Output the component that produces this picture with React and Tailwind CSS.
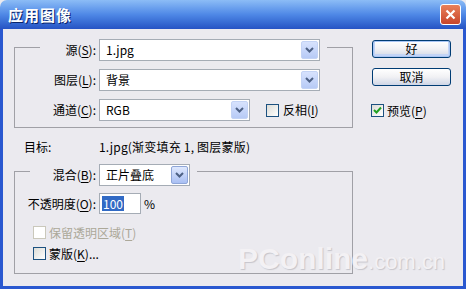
import React from "react";

const BODY = "bg-[#ebeaef]";

const U = ({ children }) => <span className="underline underline-offset-2">{children}</span>;

const Chevron = () => (
  <svg width="9" height="6" viewBox="0 0 9 6">
    <path d="M1 1 L4.5 4.5 L8 1" fill="none" stroke="#4d6185" strokeWidth="2" />
  </svg>
);

const Dropdown = ({ className, text, hot }) => (
  <div className={`h-[22px] border border-[#a5acb5] bg-white flex items-center justify-between ${className}`}>
    <span className="pl-[6px] leading-none">{text}</span>
    <div
      className={`w-[17px] h-[18px] mr-[1px] rounded-[2px] flex items-center justify-center border ${
        hot
          ? "border-[#8fa6d8] bg-gradient-to-b from-[#dfe8fd] to-[#a9bff3]"
          : "border-[#c3d3f5] bg-gradient-to-b from-[#d7e2fd] to-[#b7caf6]"
      }`}
    >
      <Chevron />
    </div>
  </div>
);

const Checkbox = ({ checked, disabled }) => (
  <div
    className={`w-[13px] h-[13px] border flex items-center justify-center ${
      disabled
        ? "border-[#cac8bb] bg-white"
        : "border-[#1c5180] bg-gradient-to-br from-[#dcdcd7] to-white"
    }`}
  >
    {checked && (
      <svg width="9" height="9" viewBox="0 0 9 9">
        <path d="M1 4 L3.5 6.5 L8 1.5" fill="none" stroke="#21a121" strokeWidth="2" />
      </svg>
    )}
  </div>
);

const Button = ({ children, primary }) => (
  <div
    className={`w-[79px] h-[18px] border border-[#003c74] rounded-[3px] flex items-center justify-center bg-gradient-to-b from-white via-[#f1f1f4] to-[#cfd6e6] ${
      primary ? "shadow-[inset_0_0_0_1px_#a9c6f5,inset_0_-1px_0_2px_#c3d4f6]" : ""
    }`}
  >
    <span className="leading-none">{children}</span>
  </div>
);

export default function App() {
  return (
    <div
      className={`w-[466px] h-[289px] relative overflow-hidden ${BODY} text-[12px] text-black`}
      style={{ fontFamily: '"Noto Sans CJK SC", "Liberation Sans", sans-serif' }}
    >
      {/* title bar */}
      <div className="h-[29px] rounded-t-[7px] flex items-center justify-between pl-[8px] pr-[5px] bg-gradient-to-b from-[#8cbcf6] via-[#4f88e6] to-[#2653c4]">
        <span className="text-white font-bold text-[15px] tracking-[1px] leading-none [text-shadow:1px_1px_0_#0a246a]">
          应用图像
        </span>
        <div className="w-[21px] h-[21px] rounded-[3px] border border-white bg-gradient-to-b from-[#e9805a] to-[#c8442a] flex items-center justify-center">
          <svg width="11" height="11" viewBox="0 0 11 11">
            <path d="M1.5 1.5 L9.5 9.5 M9.5 1.5 L1.5 9.5" stroke="white" strokeWidth="2.2" />
          </svg>
        </div>
      </div>

      {/* body */}
      <div className="h-[260px] flex border-l-[3px] border-r-[3px] border-b-[3px] border-[#2a58d0]">
        <div className="w-[339px] ml-[11px]">
          {/* group 1 */}
          <div className="mt-[18px] h-[81px] border border-[#a0a0a6]">
            <div className={`-mt-[9px] ml-[25px] w-[287px] h-[22px] flex items-center ${BODY}`}>
              <span className="w-[56px] text-right">
                源(<U>S</U>):
              </span>
              <Dropdown className="ml-[3px] w-[221px]" text="1.jpg" />
            </div>
            <div className="mt-[8px] ml-[25px] h-[22px] flex items-center">
              <span className="w-[56px] text-right">
                图层(<U>L</U>):
              </span>
              <Dropdown className="ml-[3px] w-[221px]" text="背景" />
            </div>
            <div className="mt-[8px] ml-[25px] h-[22px] flex items-center">
              <span className="w-[56px] text-right">
                通道(<U>C</U>):
              </span>
              <Dropdown className="ml-[3px] w-[151px]" text="RGB" />
              <div className="ml-[16px]">
                <Checkbox />
              </div>
              <span className="ml-[4px]">
                反相(<U>I</U>)
              </span>
            </div>
          </div>

          {/* target */}
          <div className="mt-[11px] h-[16px] flex items-center">
            <span className="ml-[10px] w-[75px]">目标:</span>
            <span className="tracking-[0.2px]">1.jpg(渐变填充 1, 图层蒙版)</span>
          </div>

          {/* group 2 */}
          <div className="mt-[16px] h-[103px] border border-[#a0a0a6]">
            <div className={`-mt-[8px] ml-[15px] w-[167px] h-[22px] flex items-center ${BODY}`}>
              <span className="w-[66px] text-right">
                混合(<U>B</U>):
              </span>
              <Dropdown className="ml-[3px] w-[91px]" text="正片叠底" hot />
            </div>
            <div className="mt-[7px] h-[21px] flex items-center">
              <span className="w-[81px] text-right">
                不透明度(<U>O</U>):
              </span>
              <div className="ml-[3px] w-[42px] h-[21px] border border-[#a5acb5] bg-white flex items-center pl-[2px]">
                <span className="bg-[#316ac5] text-white px-[1px] leading-[15px]">100</span>
              </div>
              <span className="ml-[3px]">%</span>
            </div>
            <div className="mt-[12px] ml-[18px] h-[13px] flex items-center">
              <Checkbox disabled />
              <span className="ml-[3px] text-[#aca899]">
                保留透明区域(<U>T</U>)
              </span>
            </div>
            <div className="mt-[8px] ml-[18px] h-[13px] flex items-center">
              <Checkbox />
              <span className="ml-[3px]">
                蒙版(<U>K</U>)...
              </span>
            </div>
          </div>
        </div>

        {/* right column */}
        <div className="ml-[19px] mt-[11px] flex flex-col">
          <Button primary>好</Button>
          <div className="mt-[10px]">
            <Button>取消</Button>
          </div>
          <div className="mt-[18px] -ml-[1px] h-[13px] flex items-center">
            <Checkbox checked />
            <span className="ml-[3px]">
              预览(<U>P</U>)
            </span>
          </div>
        </div>
      </div>

      {/* watermark */}
      <div
        className="absolute left-[238px] top-[244px] flex items-baseline text-[#f3f1f4] [text-shadow:1px_1px_1px_#c6c5cb] pointer-events-none"
        style={{ fontFamily: '"Liberation Sans", Arial, sans-serif' }}
      >
        <span className="text-[30px] font-bold leading-none">PConline</span>
        <span className="text-[22px] leading-none">.com.cn</span>
      </div>
    </div>
  );
}
